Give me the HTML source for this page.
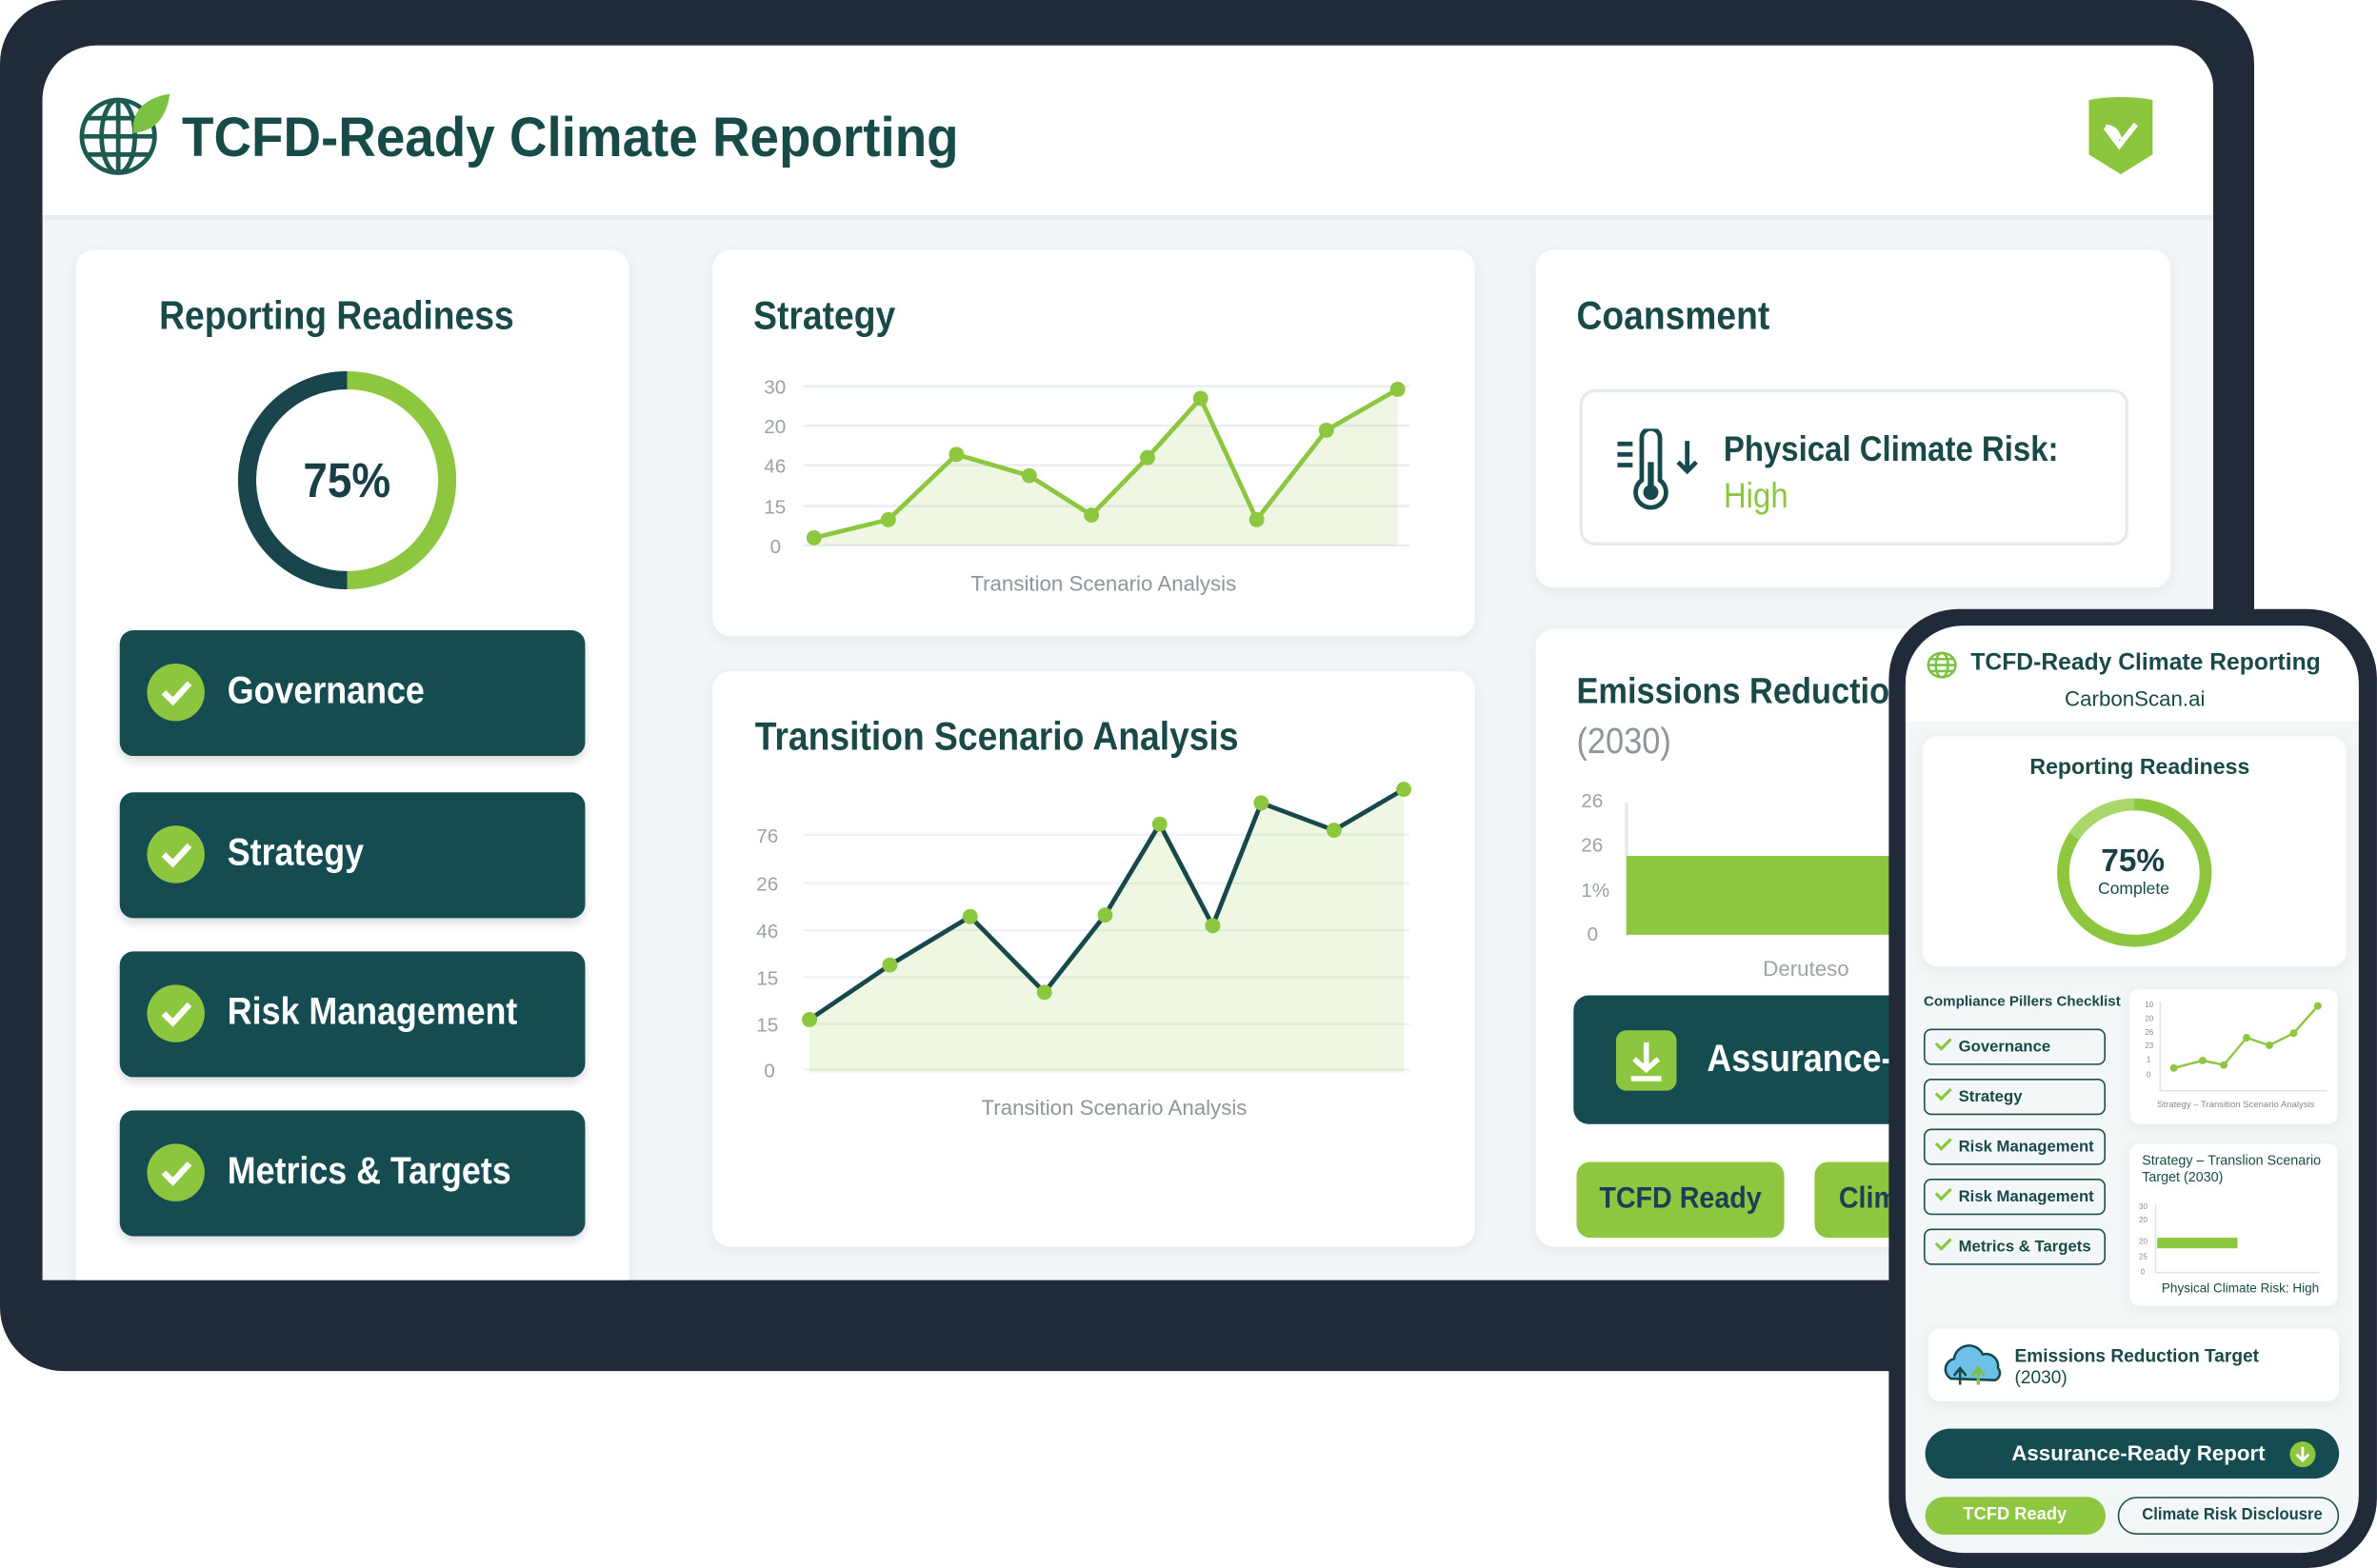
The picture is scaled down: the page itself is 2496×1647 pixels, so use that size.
<!DOCTYPE html>
<html><head><meta charset="utf-8"><style>
*{margin:0;padding:0;box-sizing:border-box}
html,body{width:2496px;height:1647px;overflow:hidden;background:#fff;font-family:"Liberation Sans",Arial,sans-serif}
#w{position:absolute;left:0;top:0;width:1568px;height:1035px;transform:scale(1.5918,1.5913);transform-origin:0 0}
.a{position:absolute}
.card{position:absolute;background:#fff;border-radius:12px;box-shadow:0 2px 8px rgba(30,60,70,.08)}
.h{position:absolute;font-weight:bold;color:#1a4a47;white-space:nowrap}
.n{transform:scaleX(.9);transform-origin:0 0}
.pill{position:absolute;left:29px;width:307px;height:83px;background:#154c52;border-radius:9px;box-shadow:0 3px 6px rgba(0,0,0,.15)}
.pill .c{position:absolute;left:18px;top:22px;width:38px;height:38px;border-radius:50%;background:#8cc63f}
.pill span{position:absolute;left:71px;top:26px;font-size:25px;font-weight:bold;color:#fff;transform:scaleX(.9);transform-origin:0 0;white-space:nowrap}
.lbl{position:absolute;font-size:13px;color:#9aa3a8}
.ck{position:absolute;left:1269px;width:120px;height:24px;border:1.5px solid #1d4d4f;border-radius:5px;font-size:10.5px;color:#1a4a47;font-weight:bold}
.ck span{position:absolute;left:22px;top:5px}
.ck i{position:absolute;left:7px;top:5px;width:10px;height:6px;border-left:2px solid #8cc63f;border-bottom:2px solid #8cc63f;transform:rotate(-45deg)}
</style></head><body><div id="w">
<div class="a" style="left:0;top:0;width:1487px;height:905px;background:#212a38;border-radius:42px"></div>
<div class="a" style="left:28px;top:30px;width:1432px;height:815px;background:#f3f6f8;border-radius:36px 28px 0 0;overflow:hidden">
 <div class="a" style="left:0;top:0;width:1432px;height:115px;background:#fff;border-bottom:3px solid #e8edf0"></div>
 <div class="card" style="left:22px;top:135px;width:365px;height:700px">
 <div class="h n" style="left:55px;top:28px;font-size:26px">Reporting Readiness</div>
 <svg class="a" style="left:107px;top:80px" width="144" height="144" viewBox="0 0 144 144">
  <path d="M72 6 A66 66 0 0 0 72 138" fill="none" stroke="#17454b" stroke-width="12"/>
  <path d="M72 6 A66 66 0 0 1 72 138" fill="none" stroke="#8dc63f" stroke-width="12"/>
 </svg>
 <div class="h n" style="left:150px;top:134px;font-size:32px;color:#183f45">75%</div>
 <div class="pill" style="top:251px"><div class="c"><svg width="38" height="38"><path d="M11 19 L17 25 L28 13" stroke="#fff" stroke-width="4" fill="none"/></svg></div><span>Governance</span></div>
 <div class="pill" style="top:358px"><div class="c"><svg width="38" height="38"><path d="M11 19 L17 25 L28 13" stroke="#fff" stroke-width="4" fill="none"/></svg></div><span>Strategy</span></div>
 <div class="pill" style="top:463px"><div class="c"><svg width="38" height="38"><path d="M11 19 L17 25 L28 13" stroke="#fff" stroke-width="4" fill="none"/></svg></div><span>Risk Management</span></div>
 <div class="pill" style="top:568px"><div class="c"><svg width="38" height="38"><path d="M11 19 L17 25 L28 13" stroke="#fff" stroke-width="4" fill="none"/></svg></div><span>Metrics &amp; Targets</span></div>
 </div>
</div>
<svg class="a" style="left:50px;top:58px" width="64" height="60" viewBox="0 0 64 60">
 <g fill="none" stroke="#1d5a4f" stroke-width="3"><circle cx="28" cy="32" r="24"/><ellipse cx="28" cy="32" rx="11" ry="24"/><line x1="4" y1="32" x2="52" y2="32"/><line x1="7" y1="20" x2="49" y2="20"/><line x1="7" y1="44" x2="49" y2="44"/><line x1="28" y1="8" x2="28" y2="56"/></g>
 <path d="M38 30 C36 14 48 6 62 4 C60 18 54 28 38 30Z" fill="#7cc242"/>
</svg>
<div class="h" style="left:120px;top:70px;font-size:37px;color:#184b47;transform:scaleX(.93);transform-origin:0 0">TCFD-Ready Climate Reporting</div>
<svg class="a" style="left:1376px;top:62px" width="46" height="54" viewBox="0 0 46 54"><path d="M2 4 Q23 0 44 4 V40 L23 53 L2 40Z" fill="#8cc63f"/><path d="M13 22 L22 34 L33 20 M13 22 Q20 22 22 30" stroke="#fff" stroke-width="3.5" fill="none"/></svg>

<div class="card" style="left:470px;top:165px;width:503px;height:255px">
 <div class="h n" style="left:27px;top:28px;font-size:26px">Strategy</div>
</div>
<svg class="a" style="left:470px;top:165px" width="503" height="255">
 <g stroke="#e9eef0" stroke-width="1.5"><line x1="60" y1="90" x2="460" y2="90"/><line x1="60" y1="116" x2="460" y2="116"/><line x1="60" y1="142" x2="460" y2="142"/><line x1="60" y1="169" x2="460" y2="169"/><line x1="60" y1="195" x2="460" y2="195"/></g>
 <g font-size="13" fill="#9aa3a8" font-family="Liberation Sans"><text x="34" y="95">30</text><text x="34" y="121">20</text><text x="34" y="147">46</text><text x="34" y="174">15</text><text x="38" y="200">0</text></g>
 <path d="M67 190 L116 178 L161 135 L209 149 L250 175 L287 137 L322 98 L359 178 L405 119 L452 92 L452 195 L67 195Z" fill="#8dc63f" opacity=".14"/>
 <polyline points="67,190 116,178 161,135 209,149 250,175 287,137 322,98 359,178 405,119 452,92" fill="none" stroke="#8dc63f" stroke-width="3"/>
 <g fill="#8dc63f"><circle cx="67" cy="190" r="5"/><circle cx="116" cy="178" r="5"/><circle cx="161" cy="135" r="5"/><circle cx="209" cy="149" r="5"/><circle cx="250" cy="175" r="5"/><circle cx="287" cy="137" r="5"/><circle cx="322" cy="98" r="5"/><circle cx="359" cy="178" r="5"/><circle cx="405" cy="119" r="5"/><circle cx="452" cy="92" r="5"/></g>
 <text x="258" y="225" text-anchor="middle" font-size="14" fill="#8d969b" font-family="Liberation Sans">Transition Scenario Analysis</text>
</svg>

<div class="card" style="left:470px;top:443px;width:503px;height:380px">
 <div class="h n" style="left:28px;top:28px;font-size:26px">Transition Scenario Analysis</div>
</div>
<svg class="a" style="left:470px;top:443px" width="503" height="380">
 <g stroke="#eef2f3" stroke-width="1.5"><line x1="60" y1="108" x2="460" y2="108"/><line x1="60" y1="140" x2="460" y2="140"/><line x1="60" y1="171" x2="460" y2="171"/><line x1="60" y1="202" x2="460" y2="202"/><line x1="60" y1="233" x2="460" y2="233"/><line x1="60" y1="263" x2="460" y2="263"/></g>
 <g font-size="13" fill="#9aa3a8" font-family="Liberation Sans"><text x="29" y="113">76</text><text x="29" y="145">26</text><text x="29" y="176">46</text><text x="29" y="207">15</text><text x="29" y="238">15</text><text x="34" y="268">0</text></g>
 <path d="M64 230 L117 194 L170 162 L219 212 L259 161 L295 101 L330 168 L362 87 L410 105 L456 78 L456 265 L64 265Z" fill="#8dc63f" opacity=".15"/>
 <polyline points="64,230 117,194 170,162 219,212 259,161 295,101 330,168 362,87 410,105 456,78" fill="none" stroke="#17494c" stroke-width="3"/>
 <g fill="#8dc63f"><circle cx="64" cy="230" r="5"/><circle cx="117" cy="194" r="5"/><circle cx="170" cy="162" r="5"/><circle cx="219" cy="212" r="5"/><circle cx="259" cy="161" r="5"/><circle cx="295" cy="101" r="5"/><circle cx="330" cy="168" r="5"/><circle cx="362" cy="87" r="5"/><circle cx="410" cy="105" r="5"/><circle cx="456" cy="78" r="5"/></g>
 <text x="265" y="293" text-anchor="middle" font-size="14" fill="#8d969b" font-family="Liberation Sans">Transition Scenario Analysis</text>
</svg>

<div class="card" style="left:1013px;top:165px;width:419px;height:223px">
 <div class="h n" style="left:27px;top:28px;font-size:26px">Coansment</div>
 <div class="a" style="left:29px;top:92px;width:362px;height:103px;border:2px solid #e3eaec;border-radius:10px"></div>
 <svg class="a" style="left:52px;top:118px" width="60" height="56" viewBox="0 0 60 56"><g fill="none" stroke="#17494c" stroke-width="3"><path d="M18 34 V6 a6 6 0 0 1 12 0 V34 a10 10 0 1 1 -12 0Z"/><line x1="2" y1="10" x2="12" y2="10"/><line x1="2" y1="17" x2="12" y2="17"/><line x1="2" y1="24" x2="12" y2="24"/><path d="M48 8 V28 M42 22 L48 28 L54 22"/></g><circle cx="24" cy="42" r="5" fill="#17494c"/><rect x="22" y="22" width="4" height="18" fill="#17494c"/></svg>
 <div class="h n" style="left:124px;top:118px;font-size:23px">Physical Climate Risk:</div>
 <div class="h n" style="left:124px;top:149px;font-size:23px;color:#8dc63f;font-weight:normal">High</div>
</div>

<div class="card" style="left:1013px;top:415px;width:419px;height:408px;overflow:hidden">
 <div class="h n" style="left:27px;top:28px;font-size:24px">Emissions Reduction Target</div>
 <div class="a n" style="left:27px;top:61px;font-size:24px;color:#8d969b">(2030)</div>
 <div class="a" style="left:59px;top:115px;width:2px;height:88px;background:#e3e8ea"></div>
 <div class="a" style="left:60px;top:150px;width:250px;height:52px;background:#8dc63f"></div>
 <div class="lbl" style="left:30px;top:106px">26</div><div class="lbl" style="left:30px;top:135px">26</div><div class="lbl" style="left:30px;top:165px">1%</div><div class="lbl" style="left:34px;top:194px">0</div>
 <div class="lbl" style="left:150px;top:216px;font-size:14px">Deruteso</div>
 <div class="a" style="left:25px;top:242px;width:380px;height:85px;background:#154c52;border-radius:10px"></div>
 <svg class="a" style="left:53px;top:265px" width="40" height="40"><rect width="40" height="40" rx="7" fill="#8cc63f"/><path d="M20 8 V26 M12 19 L20 26 L28 19 M10 32 H30" stroke="#fff" stroke-width="3.5" fill="none"/></svg>
 <div class="h n" style="left:113px;top:270px;font-size:25px;color:#fff">Assurance-Ready Report</div>
 <div class="a" style="left:27px;top:352px;width:137px;height:50px;background:#8dc63f;border-radius:9px"></div>
 <div class="h n" style="left:42px;top:365px;font-size:20px;color:#1b3f57">TCFD Ready</div>
 <div class="a" style="left:184px;top:352px;width:137px;height:50px;background:#8dc63f;border-radius:9px"></div>
 <div class="h n" style="left:200px;top:365px;font-size:20px;color:#1b3f57">Climate Risk</div>
</div>

<div class="a" style="left:1246px;top:402px;width:322px;height:633px;background:#212a38;border-radius:46px"></div>
<div class="a" style="left:1257px;top:413px;width:299px;height:612px;background:#f4f7f8;border-radius:38px;overflow:hidden">
 <div class="a" style="left:0;top:0;width:299px;height:63px;background:#fff"></div>
</div>
<svg class="a" style="left:1271px;top:430px" width="20" height="18" viewBox="0 0 20 18"><g fill="none" stroke="#7cc242" stroke-width="1.6"><ellipse cx="10" cy="9" rx="9" ry="8"/><ellipse cx="10" cy="9" rx="4" ry="8"/><line x1="1" y1="9" x2="19" y2="9"/><line x1="2" y1="5" x2="18" y2="5"/><line x1="2" y1="13" x2="18" y2="13"/></g></svg>
<div class="h" style="left:1300px;top:429px;font-size:15.5px">TCFD-Ready Climate Reporting</div>
<div class="a" style="left:1362px;top:453px;font-size:14px;color:#1a4a47">CarbonScan.ai</div>
<div class="card" style="left:1268px;top:486px;width:280px;height:152px;border-radius:10px"></div>
<div class="h" style="left:1339px;top:499px;font-size:14.5px">Reporting Readiness</div>
<svg class="a" style="left:1356px;top:526px" width="104" height="100"><ellipse cx="52" cy="50" rx="47" ry="45" fill="none" stroke="#8dc63f" stroke-width="8"/><path d="M52 5 A47 45 0 0 0 12 26" fill="none" stroke="#a8d86a" stroke-width="8"/></svg>
<div class="h" style="left:1386px;top:557px;font-size:21px;color:#183f45">75%</div>
<div class="a" style="left:1384px;top:581px;font-size:11px;color:#1a4a47">Complete</div>
<div class="h" style="left:1269px;top:656px;font-size:9.5px">Compliance Pillers Checklist</div>
<div class="ck" style="top:679px"><i></i><span>Governance</span></div>
<div class="ck" style="top:712px"><i></i><span>Strategy</span></div>
<div class="ck" style="top:745px"><i></i><span>Risk Management</span></div>
<div class="ck" style="top:778px"><i></i><span>Risk Management</span></div>
<div class="ck" style="top:811px"><i></i><span>Metrics &amp; Targets</span></div>
<div class="card" style="left:1405px;top:653px;width:137px;height:89px;border-radius:6px"></div>
<svg class="a" style="left:1405px;top:653px" width="137" height="89">
 <line x1="20" y1="8" x2="20" y2="67" stroke="#dfe5e7"/><line x1="20" y1="67" x2="130" y2="67" stroke="#dfe5e7"/>
 <g font-size="5" fill="#888" font-family="Liberation Sans"><text x="10" y="12">10</text><text x="10" y="21">20</text><text x="10" y="30">26</text><text x="10" y="39">23</text><text x="11" y="48">1</text><text x="11" y="58">0</text></g>
 <polyline points="29,52 48,47 62,50 77,32 92,37 108,29 124,11" fill="none" stroke="#8dc63f" stroke-width="1.5"/>
 <g fill="#8dc63f"><circle cx="29" cy="52" r="2.5"/><circle cx="48" cy="47" r="2.5"/><circle cx="62" cy="50" r="2.5"/><circle cx="77" cy="32" r="2.5"/><circle cx="92" cy="37" r="2.5"/><circle cx="108" cy="29" r="2.5"/><circle cx="124" cy="11" r="2.5"/></g>
 <text x="18" y="78" font-size="6" fill="#888" font-family="Liberation Sans">Strategy – Transition Scenario Analysis</text>
</svg>
<div class="card" style="left:1405px;top:755px;width:137px;height:107px;border-radius:6px"></div>
<div class="a" style="left:1413px;top:761px;font-size:9px;color:#1a4a47;line-height:11px">Strategy – Translion Scenario<br>Target (2030)</div>
<svg class="a" style="left:1405px;top:790px" width="137" height="70">
 <line x1="17" y1="5" x2="17" y2="50" stroke="#dfe5e7"/><line x1="17" y1="50" x2="125" y2="50" stroke="#dfe5e7"/>
 <rect x="18" y="27" width="53" height="7" fill="#8dc63f"/>
 <g font-size="5" fill="#888" font-family="Liberation Sans"><text x="6" y="8">30</text><text x="6" y="17">20</text><text x="6" y="31">20</text><text x="6" y="41">25</text><text x="7" y="51">0</text></g>
 <text x="21" y="63" font-size="8.5" fill="#1a4a47" font-family="Liberation Sans">Physical Climate Risk: High</text>
</svg>
<div class="card" style="left:1272px;top:877px;width:271px;height:48px;border-radius:8px"></div>
<svg class="a" style="left:1279px;top:886px" width="42" height="30" viewBox="0 0 42 30"><path d="M8 24 a7 7 0 0 1 2-13 a10 10 0 0 1 19-3 a8 8 0 0 1 10 9 a5 5 0 0 1 -2 8Z" fill="#6fc0e8" stroke="#17494c" stroke-width="1.6"/><path d="M14 28 V18 M10 22 L14 17 L18 22" stroke="#17494c" stroke-width="1.6" fill="none"/><path d="M26 28 V18 M22 22 L26 17 L30 22" stroke="#7cc242" stroke-width="2" fill="none"/></svg>
<div class="a" style="left:1329px;top:888px;font-size:12px;color:#1a4a47;font-weight:bold;line-height:14px">Emissions Reduction Target<br><span style="font-weight:normal">(2030)</span></div>
<div class="a" style="left:1270px;top:943px;width:273px;height:33px;background:#154c52;border-radius:17px"></div>
<div class="h" style="left:1327px;top:951px;font-size:14px;color:#fff">Assurance-Ready Report</div>
<svg class="a" style="left:1510px;top:951px" width="18" height="18"><circle cx="9" cy="9" r="8.5" fill="#8cc63f"/><path d="M9 4 V13 M5 9 L9 13 L13 9" stroke="#fff" stroke-width="1.8" fill="none"/></svg>
<div class="a" style="left:1270px;top:988px;width:119px;height:25px;background:#8dc63f;border-radius:13px"></div>
<div class="h" style="left:1295px;top:994px;font-size:11.5px;color:#fff">TCFD Ready</div>
<div class="a" style="left:1397px;top:988px;width:146px;height:25px;border:1.5px solid #1d4d4f;border-radius:13px"></div>
<div class="a" style="left:1413px;top:994px;font-size:11px;color:#1a4a47;font-weight:bold;transform:scaleX(.95);transform-origin:0 0">Climate Risk Disclousre</div>
</div></body></html>
